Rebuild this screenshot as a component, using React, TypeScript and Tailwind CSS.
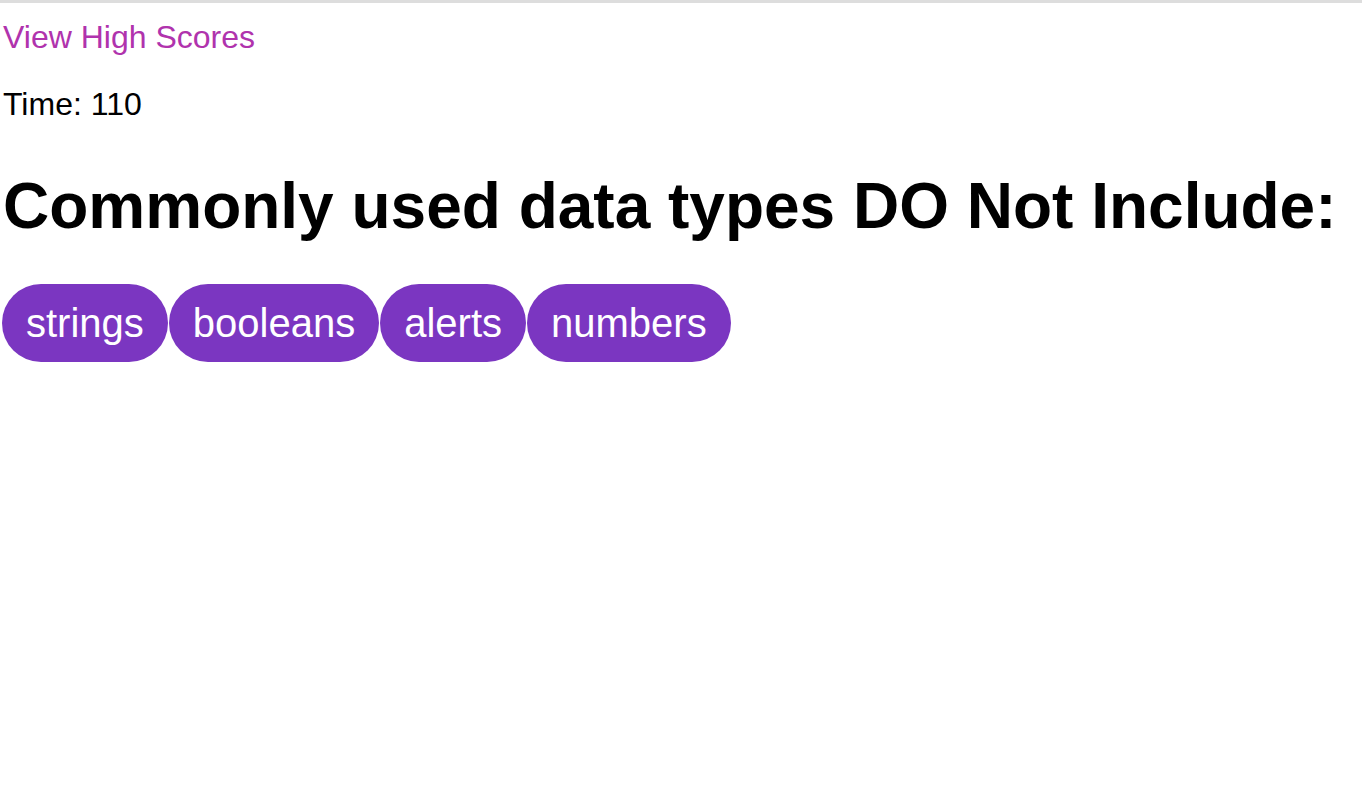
const choices = ["strings", "booleans", "alerts", "numbers"];

export default function App() {
  return (
    <div className="min-h-screen bg-white border-t-[3px] border-[#dddddd] pl-[3px] font-['Liberation_Sans',Arial,sans-serif] text-black">
      <a href="#" className="block mt-[16px] text-[32px] leading-[37px] text-[#b033ad] w-fit">
        View High Scores
      </a>
      <p className="mt-[30px] text-[32px] leading-[37px]">Time: 110</p>
      <h1 className="mt-[46px] text-[64px] leading-[74px] font-bold">
        Commonly used data types DO Not Include:
      </h1>
      <div className="mt-[41px] flex -ml-[1px]">
        {choices.map((c) => (
          <button
            key={c}
            className="h-[78px] px-[24px] rounded-full bg-[#7b36c1] text-white text-[40px] leading-[46px] mr-[1px]"
          >
            {c}
          </button>
        ))}
      </div>
    </div>
  );
}
